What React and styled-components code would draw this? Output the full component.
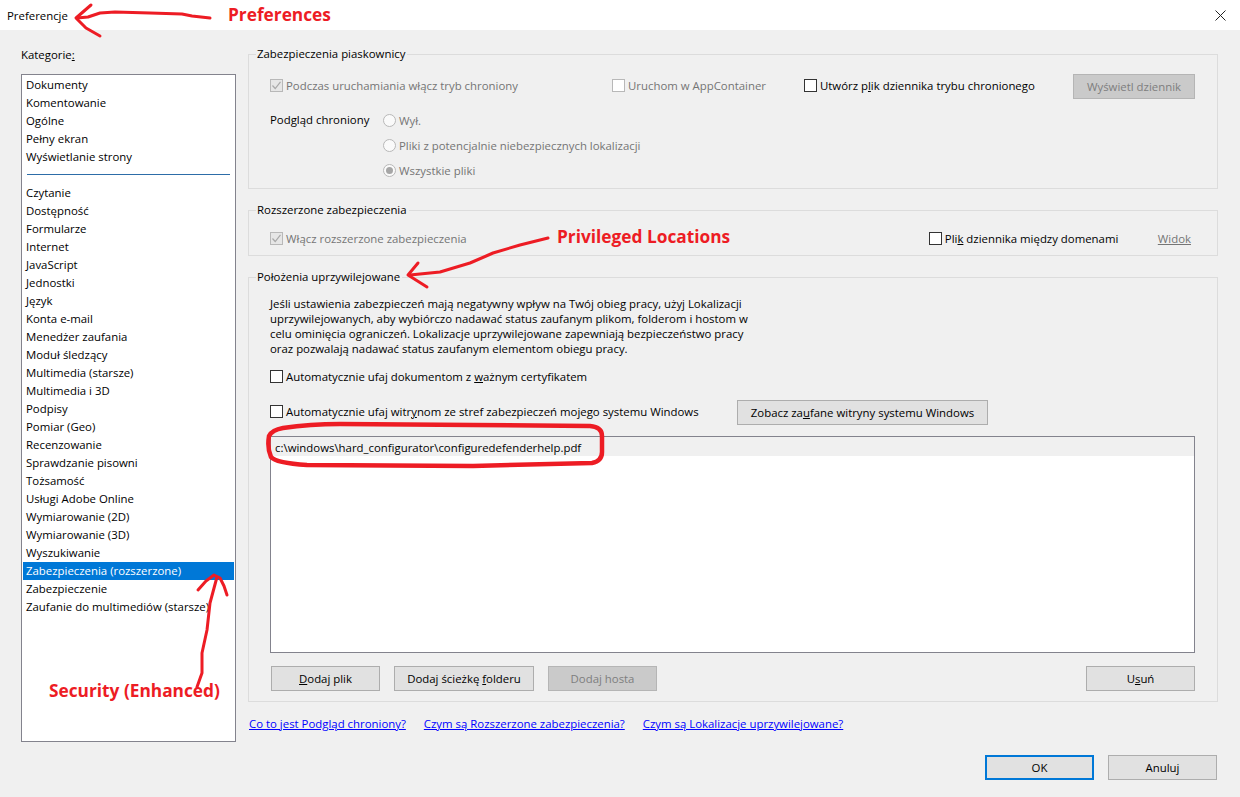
import React from 'react'
import styled, { createGlobalStyle } from 'styled-components'

const Global = createGlobalStyle`
    html, body {
        margin: 0;
        padding: 0;
        background: #f0f0f0;
    }
    body {
        font-family: "Open Sans", "Noto Sans", "Liberation Sans", sans-serif;
        font-size: 11.4px;
        color: #000;
    }
`

const Window = styled.div`
    position: relative;
    width: 1240px;
    height: 797px;
    overflow: hidden;
    background: #f0f0f0;
`

// title bar
const TitleBar = styled.div`
    height: 30px;
    background: #fff;
    display: flex;
    align-items: center;
    justify-content: space-between;
    padding: 0 14px 0 7px;
`

const CloseIcon = styled.svg`
    width: 11px;
    height: 11px;
    display: block;
`

const Body = styled.div`
    display: flex;
    padding: 15px 22px 0 21px;
    gap: 12px;
`

// left column
const Sidebar = styled.div`
    width: 215px;
    flex: none;
`

const SideLabel = styled.div`
    height: 29px;
    line-height: 20px;
`

const CategoryBox = styled.div`
    height: 668px;
    box-sizing: border-box;
    border: 1px solid #83838d;
    background: #fff;
    padding: 1px 1px;
`

const Category = styled.div`
    height: 18px;
    line-height: 18px;
    padding-left: 3px;
    white-space: nowrap;
    color: ${props => (props.$selected ? '#fff' : '#000')};
    background: ${props => (props.$selected ? '#0078d7' : 'transparent')};
`

const CategoryRule = styled.div`
    height: 1px;
    margin: 8px 4px 9px 4px;
    background: #2d6da8;
`

// right column
const Main = styled.div`
    flex: 1;
    min-width: 0;
`

const Group = styled.fieldset`
    margin: 0 0 ${props => props.$gap || 0}px 0;
    padding: 0 22px 0 21px;
    min-width: 0;
    height: ${props => props.$height}px;
    box-sizing: border-box;
    border: 1px solid #dcdcdc;
`

const Legend = styled.legend`
    padding: 0 2px 0 1px;
    margin-inline-start: -14px;
    line-height: 18px;
`

const Row = styled.div`
    display: flex;
    align-items: center;
    height: ${props => props.$height || 25}px;
    margin-top: ${props => props.$top || 0}px;
`

const Check = styled.span`
    width: 13px;
    height: 13px;
    flex: none;
    box-sizing: border-box;
    border: 1px solid ${props => (props.$disabled ? '#b8b8b8' : '#333')};
    background: ${props => (props.$disabled && props.$checked ? '#e6e6e6' : '#fff')};
    display: flex;
    align-items: center;
    justify-content: center;
`

const CheckLabel = styled.label`
    display: flex;
    align-items: center;
    gap: 3px;
    flex: none;
    white-space: nowrap;
    width: ${props => (props.$width ? `${props.$width}px` : 'auto')};
    color: ${props => (props.$disabled ? '#757575' : '#000')};
`

const CheckBox = ({ disabled, checked, width, children }) => (
    <CheckLabel $disabled={disabled} $width={width}>
        <Check $disabled={disabled} $checked={checked}>
            {checked && (
                <svg width="11" height="11" viewBox="0 0 11 11">
                    <path d="M1.5 5.5 L4.2 8.5 L9.5 1.8" fill="none" stroke="#a8a8a8" strokeWidth="1.2" />
                </svg>
            )}
        </Check>
        <span>{children}</span>
    </CheckLabel>
)

const RadioDot = styled.span`
    width: 13px;
    height: 13px;
    flex: none;
    box-sizing: border-box;
    border-radius: 50%;
    border: 1px solid #b8b8b8;
    background: #fafafa;
    display: flex;
    align-items: center;
    justify-content: center;
    &::after {
        content: '';
        width: 7px;
        height: 7px;
        border-radius: 50%;
        background: ${props => (props.$on ? '#a6a6a6' : 'transparent')};
    }
`

const PreviewRow = styled.div`
    display: flex;
    margin-top: 10px;
`

const PreviewLabel = styled.div`
    width: 113px;
    flex: none;
    line-height: 24px;
    height: 25px;
`

const RadioList = styled.div`
    display: flex;
    flex-direction: column;
`

const RadioItem = styled.label`
    display: flex;
    align-items: center;
    gap: 3px;
    height: 25px;
    color: #757575;
`

const Button = styled.button`
    box-sizing: border-box;
    width: ${props => props.$width}px;
    height: 25px;
    flex: none;
    padding: 0;
    margin-left: ${props => props.$left || 0}px;
    margin-top: ${props => props.$top || 0}px;
    font: inherit;
    border: ${props => (props.$primary ? '2px solid #0078d7' : `1px solid ${props.disabled ? '#b5b5b5' : '#adadad'}`)};
    background: ${props => (props.disabled ? '#cacaca' : '#e1e1e1')};
    color: ${props => (props.disabled ? '#7e7e7e' : '#000')};
`

const Spacer = styled.div`
    flex: 1;
`

const ViewLink = styled.span`
    color: #757575;
    text-decoration: underline;
    margin-right: 4px;
`

const Intro = styled.p`
    margin: 0;
    padding-top: 10px;
    line-height: 15px;
    white-space: nowrap;
`

const PathList = styled.div`
    height: 217px;
    margin-top: 12px;
    box-sizing: border-box;
    border: 1px solid #83838d;
    background: #fff;
`

const PathItem = styled.div`
    height: 19px;
    box-sizing: border-box;
    padding: 1px 0 0 4px;
    line-height: 20px;
    background: #f0f0f0;
`

const Links = styled.div`
    display: flex;
    gap: 18px;
    margin-top: 13px;
    height: 18px;
    line-height: 18px;
    padding-left: 1px;
`

const HelpLink = styled.a`
    color: #0000ff;
    text-decoration: underline;
`

const Footer = styled.div`
    display: flex;
    justify-content: flex-end;
    gap: 14px;
    margin-top: 22px;
    padding-right: 1px;
`

// red notes painted over the dialog
const Scribbles = styled.svg`
    position: absolute;
    left: 0;
    top: 0;
    width: 1240px;
    height: 797px;
    pointer-events: none;
`

const Note = styled.span`
    position: absolute;
    left: ${props => props.$x}px;
    top: ${props => props.$y}px;
    font-size: 17.3px;
    line-height: 22px;
    font-weight: 700;
    color: #ed1c24;
    white-space: nowrap;
`

const FIRST = ['Dokumenty', 'Komentowanie', 'Ogólne', 'Pełny ekran', 'Wyświetlanie strony']
const REST = [
    'Czytanie', 'Dostępność', 'Formularze', 'Internet', 'JavaScript', 'Jednostki', 'Język', 'Konta e-mail',
    'Menedżer zaufania', 'Moduł śledzący', 'Multimedia (starsze)', 'Multimedia i 3D', 'Podpisy', 'Pomiar (Geo)',
    'Recenzowanie', 'Sprawdzanie pisowni', 'Tożsamość', 'Usługi Adobe Online', 'Wymiarowanie (2D)',
    'Wymiarowanie (3D)', 'Wyszukiwanie', 'Zabezpieczenia (rozszerzone)', 'Zabezpieczenie',
    'Zaufanie do multimediów (starsze)',
]

const App = () => {
    return (
        <Window>
            <Global />
            <TitleBar>
                <span>Preferencje</span>
                <CloseIcon viewBox="0 0 11 11">
                    <path d="M0.5 0.5 L10.5 10.5 M10.5 0.5 L0.5 10.5" stroke="#222" strokeWidth="1" fill="none" />
                </CloseIcon>
            </TitleBar>

            <Body>
                <Sidebar>
                    <SideLabel>Kategorie<u>:</u></SideLabel>
                    <CategoryBox>
                        {FIRST.map(name => <Category key={name}>{name}</Category>)}
                        <CategoryRule />
                        {REST.map(name => (
                            <Category key={name} $selected={name === 'Zabezpieczenia (rozszerzone)'}>{name}</Category>
                        ))}
                    </CategoryBox>
                </Sidebar>

                <Main>
                    <Group $height={144} $gap={12}>
                        <Legend>Zabezpieczenia piaskownicy</Legend>
                        <Row $top={10} $height={25}>
                            <CheckBox disabled checked width={342}>Podczas uruchamiania włącz tryb chroniony</CheckBox>
                            <CheckBox disabled width={192}>Uruchom w AppContainer</CheckBox>
                            <CheckBox>Utwórz p<u>l</u>ik dziennika trybu chronionego</CheckBox>
                            <Spacer />
                            <Button disabled $width={122} $top={2}>Wyświetl dziennik</Button>
                        </Row>
                        <PreviewRow>
                            <PreviewLabel>Podgląd chroniony</PreviewLabel>
                            <RadioList>
                                <RadioItem><RadioDot />Wył.</RadioItem>
                                <RadioItem><RadioDot />Pliki z potencjalnie niebezpiecznych lokalizacji</RadioItem>
                                <RadioItem><RadioDot $on />Wszystkie pliki</RadioItem>
                            </RadioList>
                        </PreviewRow>
                    </Group>

                    <Group $height={55} $gap={12}>
                        <Legend>Rozszerzone zabezpieczenia</Legend>
                        <Row $top={10} $height={18}>
                            <CheckBox disabled checked>Włącz rozszerzone zabezpieczenia</CheckBox>
                            <Spacer />
                            <CheckBox width={229}>Pli<u>k</u> dziennika między domenami</CheckBox>
                            <ViewLink>Widok</ViewLink>
                        </Row>
                    </Group>

                    <Group $height={434}>
                        <Legend>Położenia uprzywilejowane</Legend>
                        <Intro>
                            Jeśli ustawienia zabezpieczeń mają negatywny wpływ na Twój obieg pracy, użyj Lokalizacji<br />
                            uprzywilejowanych, aby wybiórczo nadawać status zaufanym plikom, folderom i hostom w<br />
                            celu ominięcia ograniczeń. Lokalizacje uprzywilejowane zapewniają bezpieczeństwo pracy<br />
                            oraz pozwalają nadawać status zaufanym elementom obiegu pracy.
                        </Intro>
                        <Row $top={10} $height={20}>
                            <CheckBox>Automatycznie ufaj dokumentom z <u>w</u>ażnym certyfikatem</CheckBox>
                        </Row>
                        <Row $top={13} $height={25}>
                            <CheckBox width={467}>Automatycznie ufaj witr<u>y</u>nom ze stref zabezpieczeń mojego systemu Windows</CheckBox>
                            <Button $width={251} $top={2}>Zobacz za<u>u</u>fane witryny systemu Windows</Button>
                        </Row>
                        <PathList>
                            <PathItem>c:\windows\hard_configurator\configuredefenderhelp.pdf</PathItem>
                        </PathList>
                        <Row $top={13} $height={25}>
                            <Button $width={109} $left={1}><u>D</u>odaj plik</Button>
                            <Button $width={140} $left={14}>Dodaj ścieżkę <u>f</u>olderu</Button>
                            <Button disabled $width={109} $left={14}>Dodaj hosta</Button>
                            <Spacer />
                            <Button $width={109}>U<u>s</u>uń</Button>
                        </Row>
                    </Group>

                    <Links>
                        <HelpLink>Co to jest Podgląd chroniony?</HelpLink>
                        <HelpLink>Czym są Rozszerzone zabezpieczenia?</HelpLink>
                        <HelpLink>Czym są Lokalizacje uprzywilejowane?</HelpLink>
                    </Links>

                    <Footer>
                        <Button $primary $width={109}>OK</Button>
                        <Button $width={109}>Anuluj</Button>
                    </Footer>
                </Main>
            </Body>

            <Scribbles viewBox="0 0 1240 797" fill="none" stroke="#ed1c24" strokeLinecap="round" strokeLinejoin="round">
                <path strokeWidth="3" d="M210 18 L192 16 L182 14 L150 13 L115 12 L100 13 L88 17 L77 18" />
                <path strokeWidth="3" d="M91 5 L76 18 L86 28 L100 36" />
                <path strokeWidth="3" d="M548 238 L520 245 L493 253 L470 263 L440 272 L410 275" />
                <path strokeWidth="3" d="M418 263 L408 275 L427 287" />
                <path strokeWidth="3" d="M197 687 L202 673 L202 653 L207 630 L210 603 L217 577" />
                <path strokeWidth="3" d="M198 590 L206 581 L214 575 L220 578 L224 586 L227 595" />
                <path strokeWidth="4.5" d="M283 428 Q310 424 340 424 L473 425 L590 426 Q602 427 602 436 L602 452 Q602 461 592 463 L473 466 L307 465 Q276 463 271 457 Q267 448 269 436 Q272 430 283 428 Z" />
            </Scribbles>
            <Note $x={228} $y={4}>Preferences</Note>
            <Note $x={557} $y={226}>Privileged Locations</Note>
            <Note $x={49} $y={680}>Security (Enhanced)</Note>
        </Window>
    )
}

export default App
